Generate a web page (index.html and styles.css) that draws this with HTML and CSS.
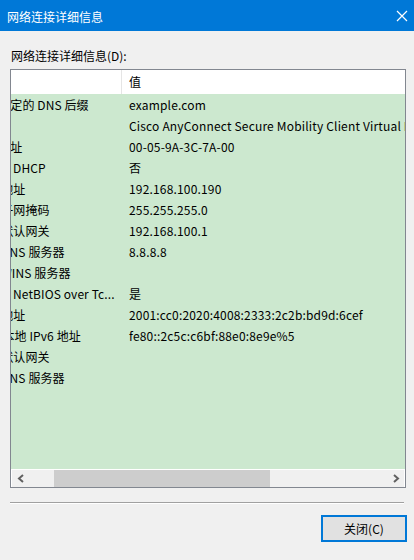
FILE: index.html
```html
<!DOCTYPE html>
<html lang="zh-CN">
<head>
<meta charset="utf-8">
<title>网络连接详细信息</title>
<link rel="stylesheet" href="styles.css">
</head>
<body>
<div class="window">
  <div class="titlebar">
    <span class="title">网络连接详细信息</span>
    <svg class="close" width="12" height="12" viewBox="0 0 12 12"><path d="M1 1L11 11M11 1L1 11" stroke="#fff" stroke-width="1.2"/></svg>
  </div>
  <div class="body">
    <div class="label">网络连接详细信息(D):</div>
    <div class="listbox">
      <div class="viewport">
        <div class="content">
          <div class="row header"><div class="c1">属性</div><div class="c2">值</div></div>
          <div class="row"><div class="c1">连接特定的 DNS 后缀</div><div class="c2">example.com</div></div>
          <div class="row"><div class="c1">描述</div><div class="c2">Cisco AnyConnect Secure Mobility Client Virtual Miniport Adapter for Windows x64</div></div>
          <div class="row"><div class="c1">物理地址</div><div class="c2">00-05-9A-3C-7A-00</div></div>
          <div class="row"><div class="c1">已启用 DHCP</div><div class="c2">否</div></div>
          <div class="row"><div class="c1">IPv4 地址</div><div class="c2">192.168.100.190</div></div>
          <div class="row"><div class="c1">IPv4 子网掩码</div><div class="c2">255.255.255.0</div></div>
          <div class="row"><div class="c1">IPv4 默认网关</div><div class="c2">192.168.100.1</div></div>
          <div class="row"><div class="c1">IPv4 DNS 服务器</div><div class="c2">8.8.8.8</div></div>
          <div class="row"><div class="c1">IPv4 WINS 服务器</div><div class="c2"></div></div>
          <div class="row"><div class="c1">已启用 NetBIOS over Tc...</div><div class="c2">是</div></div>
          <div class="row"><div class="c1">IPv6 地址</div><div class="c2">2001:cc0:2020:4008:2333:2c2b:bd9d:6cef</div></div>
          <div class="row"><div class="c1">连接-本地 IPv6 地址</div><div class="c2">fe80::2c5c:c6bf:88e0:8e9e%5</div></div>
          <div class="row"><div class="c1">IPv6 默认网关</div><div class="c2"></div></div>
          <div class="row"><div class="c1">IPv6 DNS 服务器</div><div class="c2"></div></div>
        </div>
      </div>
      <div class="hscroll">
        <div class="arrow">
          <svg width="8" height="9" viewBox="0 0 8 9"><path d="M6 1L2 4.5L6 8" fill="none" stroke="#606060" stroke-width="2"/></svg>
        </div>
        <div class="track"><div class="thumb"></div></div>
        <div class="arrow">
          <svg width="8" height="9" viewBox="0 0 8 9"><path d="M2 1L6 4.5L2 8" fill="none" stroke="#606060" stroke-width="2"/></svg>
        </div>
      </div>
    </div>
    <div class="sep"></div>
    <div class="footer">
      <button class="btn">关闭(C)</button>
    </div>
  </div>
</div>
</body>
</html>
```

FILE: styles.css
```css
* { box-sizing: border-box; }
html, body {
  margin: 0;
  padding: 0;
  background: #f0f0f0;
}
body {
  font-family: "Noto Sans CJK SC", "Noto Sans", sans-serif;
  font-size: 12px;
  color: #000;
}
.window {
  width: 414px;
  height: 560px;
  display: flex;
  flex-direction: column;
}
.titlebar {
  height: 31px;
  background: #0078d7;
  color: #fff;
  display: flex;
  align-items: center;
  justify-content: space-between;
  padding: 2px 6px 0 7px;
}
.title {
  font-size: 12px;
  line-height: 16px;
}
.close {
  display: block;
  margin-top: -1px;
}
.body {
  padding: 17px 8px 0 10px;
  display: flex;
  flex-direction: column;
}
.label {
  line-height: 16px;
  padding-left: 1px;
  margin-bottom: 5px;
}
.listbox {
  border: 1px solid #828790;
  height: 419px;
  display: flex;
  flex-direction: column;
  background: #cce8cf;
}
.viewport {
  height: 399px;
  overflow: hidden;
  position: relative;
}
.content {
  margin-left: -43px;
  width: 900px;
}
.row {
  display: flex;
  height: 21px;
  line-height: 21px;
  white-space: nowrap;
}
.row.header {
  height: 24px;
  line-height: 24px;
  background: #fff;
}
.c1 {
  width: 154px;
  flex: none;
  padding-left: 6px;
  overflow: hidden;
  letter-spacing: 0.1px;
}
.header .c1 {
  border-right: 1px solid #e5e5e5;
}
.c2 {
  flex: none;
  padding-left: 7px;
  width: 700px;
  overflow: hidden;
  letter-spacing: 0.17px;
}
.hscroll {
  height: 18px;
  display: flex;
  background: #f0f0f0;
  border: 1px solid #fff;
  border-bottom: 0;
}
.arrow {
  width: 17px;
  flex: none;
  display: flex;
  align-items: center;
  justify-content: center;
}
.track {
  flex: 1;
  padding-left: 25px;
}
.thumb {
  width: 216px;
  height: 100%;
  background: #cdcdcd;
}
.sep {
  margin-top: 14px;
  width: 394px;
  height: 2px;
  border-top: 1px solid #a0a0a0;
  border-bottom: 1px solid #fff;
}
.footer {
  display: flex;
  justify-content: flex-end;
  margin-top: 11px;
  margin-right: -1px;
}
.btn {
  width: 86px;
  height: 27px;
  background: #e1e1e1;
  border: 2px solid #0078d7;
  font-family: "Noto Sans CJK SC", "Noto Sans", sans-serif;
  font-size: 12px;
  color: #000;
  padding: 0;
  line-height: 21px;
}
```
